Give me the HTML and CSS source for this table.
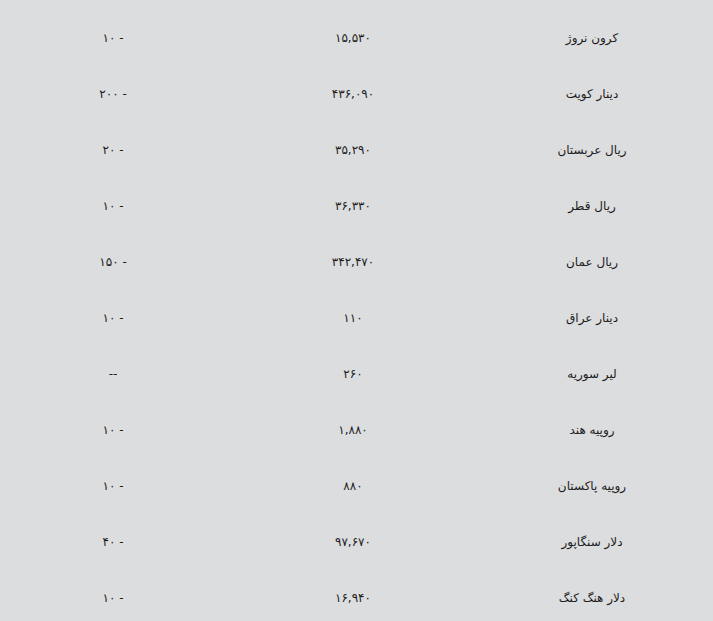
FILE: index.html
```html
<!DOCTYPE html>
<html lang="fa">
<head>
<meta charset="utf-8">
<link rel="stylesheet" href="styles.css">
</head>
<body>
<div class="table">
  <div class="row"><div class="chg" dir="ltr">۱۰ -</div><div class="val">۱۵,۵۳۰</div><div class="name">کرون نروژ</div></div>
  <div class="row"><div class="chg" dir="ltr">۲۰۰ -</div><div class="val">۴۳۶,۰۹۰</div><div class="name">دینار کویت</div></div>
  <div class="row"><div class="chg" dir="ltr">۲۰ -</div><div class="val">۳۵,۲۹۰</div><div class="name">ریال عربستان</div></div>
  <div class="row"><div class="chg" dir="ltr">۱۰ -</div><div class="val">۳۶,۳۳۰</div><div class="name">ریال قطر</div></div>
  <div class="row"><div class="chg" dir="ltr">۱۵۰ -</div><div class="val">۳۴۲,۴۷۰</div><div class="name">ریال عمان</div></div>
  <div class="row"><div class="chg" dir="ltr">۱۰ -</div><div class="val">۱۱۰</div><div class="name">دینار عراق</div></div>
  <div class="row"><div class="chg" dir="ltr">--</div><div class="val">۲۶۰</div><div class="name">لیر سوریه</div></div>
  <div class="row"><div class="chg" dir="ltr">۱۰ -</div><div class="val">۱,۸۸۰</div><div class="name">روپیه هند</div></div>
  <div class="row"><div class="chg" dir="ltr">۱۰ -</div><div class="val">۸۸۰</div><div class="name">روپیه پاکستان</div></div>
  <div class="row"><div class="chg" dir="ltr">۴۰ -</div><div class="val">۹۷,۶۷۰</div><div class="name">دلار سنگاپور</div></div>
  <div class="row"><div class="chg" dir="ltr">۱۰ -</div><div class="val">۱۶,۹۴۰</div><div class="name">دلار هنگ کنگ</div></div>
</div>
</body>
</html>
```
FILE: styles.css
```css
html, body {
  margin: 0;
  padding: 0;
  background: #dcdddf;
}
body {
  font-family: "DejaVu Sans", "Noto Sans", sans-serif;
  font-size: 12px;
  color: #1c1c1c;
  overflow: hidden;
}
.table {
  padding-top: 10px;
  padding-right: 9px;
}
.row {
  display: grid;
  grid-template-columns: 226px 254px 224px;
  height: 56px;
  align-items: center;
  text-align: center;
}
```
